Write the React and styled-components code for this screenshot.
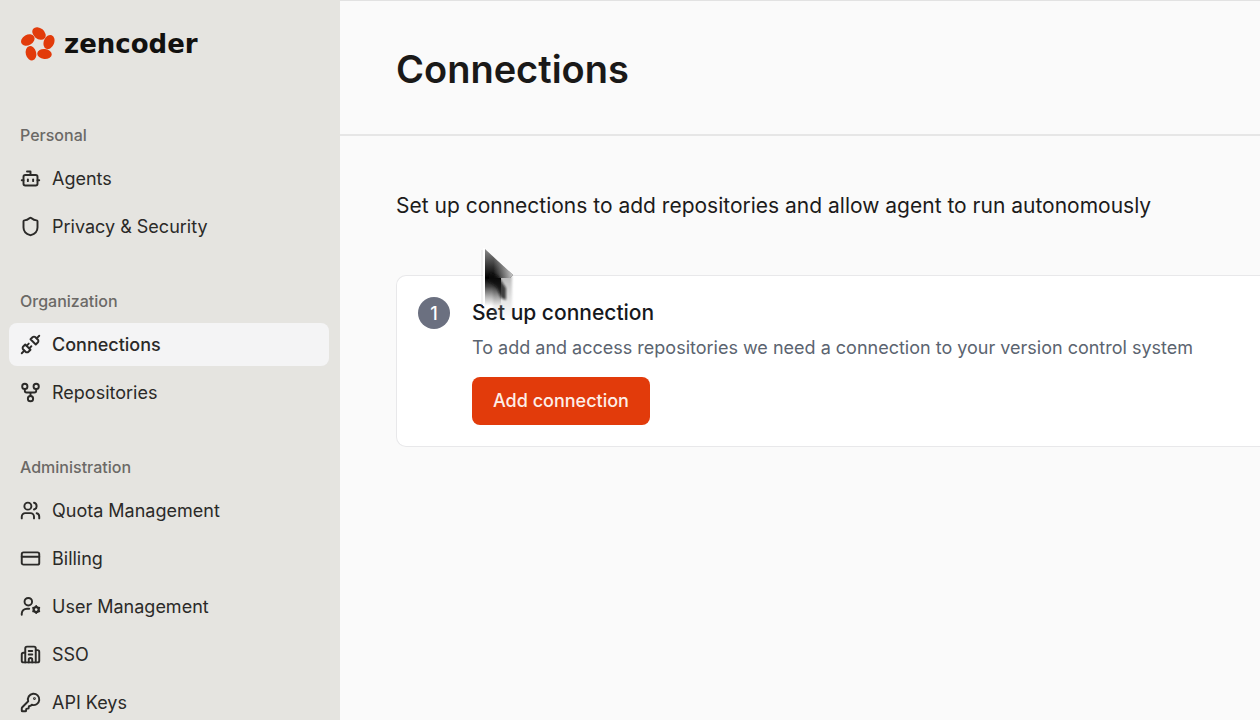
import React from 'react';
import styled, { createGlobalStyle } from 'styled-components';
import { Bot, Shield, Unplug, Users, CreditCard, Building2, KeyRound } from 'lucide-react';

const GlobalStyle = createGlobalStyle`
    * {
        box-sizing: border-box;
    }

    body {
        margin: 0;
        overflow: hidden;
        font-family: 'Inter', 'Liberation Sans', sans-serif;
        color: #1c1b1a;
        background: #fafafa;
    }
`

const Page = styled.div`
    display: flex;
    height: 100vh;
    overflow: hidden;
`

// Sidebar
const Sidebar = styled.aside`
    flex: 0 0 340px;
    padding: 24px 11px 0 9px;
    background: #e5e4e0;
`

const Logo = styled.a`
    display: flex;
    align-items: center;
    gap: 8px;
    height: 40px;
    padding-left: 11px;
    margin-bottom: 61px;
    font-family: 'DejaVu Sans', sans-serif;
    font-weight: 700;
    font-size: 26px;
    line-height: 24px;
    color: #12110f;
    text-decoration: none;
`

const Nav = styled.nav`
    display: flex;
    flex-direction: column;
    gap: 43px;
`

const GroupTitle = styled.h2`
    margin: 0 0 12px;
    padding-left: 11px;
    font-weight: 500;
    font-size: 16px;
    line-height: 20px;
    color: #6b6966;
`

const List = styled.ul`
    display: flex;
    flex-direction: column;
    gap: 5px;
    margin: 0;
    padding: 0;
    list-style: none;
`

const NavLink = styled.a`
    display: flex;
    align-items: center;
    gap: 11px;
    height: 43px;
    padding: 0 11px;
    border-radius: 8px;
    font-weight: ${({ $active }) => ($active ? 500 : 400)};
    font-size: 18px;
    line-height: 24px;
    color: #2b2a28;
    text-decoration: none;
    background: ${({ $active }) => ($active ? '#f4f4f5' : 'transparent')};
`

// Content
const Content = styled.main`
    flex: 1;
    min-width: 0;
    border-top: 1px solid #e2e2e2;
`

const Header = styled.header`
    padding: 44px 56px 40px;
    border-bottom: 2px solid #e6e6e6;
`

const Title = styled.h1`
    margin: 0;
    font-weight: 600;
    font-size: 38px;
    line-height: 49px;
    color: #1a1918;
`

const Body = styled.div`
    padding: 56px 0 0 56px;
`

const Intro = styled.p`
    margin: 0 0 56px;
    font-size: 21px;
    line-height: 27px;
    white-space: nowrap;
`

const Card = styled.section`
    display: flex;
    gap: 22px;
    padding: 21px;
    border: 1px solid #e8e8ea;
    border-right: 0;
    border-radius: 10px 0 0 10px;
    background: #ffffff;
`

const Step = styled.span`
    display: flex;
    flex: none;
    align-items: center;
    justify-content: center;
    width: 32px;
    height: 32px;
    border-radius: 50%;
    font-weight: 500;
    font-size: 18px;
    color: #ffffff;
    background: #6b7080;
`

const CardTitle = styled.h3`
    margin: 0 0 7px;
    font-weight: 500;
    font-size: 21px;
    line-height: 32px;
    color: #16181d;
`

const CardText = styled.p`
    margin: 0 0 17px;
    font-size: 18px;
    line-height: 24px;
    white-space: nowrap;
    color: #5b6470;
`

const Button = styled.button`
    height: 48px;
    padding: 0 21px;
    border: 0;
    border-radius: 8px;
    font-family: inherit;
    font-weight: 500;
    font-size: 18px;
    line-height: 24px;
    color: #fdeee8;
    background: #e23b0b;
`

const Cursor = styled.svg`
    position: absolute;
    left: 476px;
    top: 244px;
    pointer-events: none;
`

function Stroked({ size, strokeWidth, children }) {
    return (
        <svg
            width={size}
            height={size}
            viewBox="0 0 24 24"
            fill="none"
            stroke="currentColor"
            strokeWidth={strokeWidth}
            strokeLinecap="round"
            strokeLinejoin="round"
            aria-hidden="true"
        >
            {children}
        </svg>
    );
}

function RepoIcon(props) {
    return (
        <Stroked {...props}>
            <circle cx="5.500" cy="5" r="3" />
            <circle cx="18.500" cy="5" r="3" />
            <circle cx="12" cy="19" r="3" />
            <path d="M5.500 8v2a2 2 0 0 0 2 2h9a2 2 0 0 0 2-2V8M12 12v4" />
        </Stroked>
    );
}

function UserGearIcon(props) {
    return (
        <Stroked {...props}>
            <circle cx="9.500" cy="6.500" r="4.300" />
            <path d="M2 21.500v-1.500a6 6 0 0 1 6-5.500h2.500" />
            <circle cx="18.500" cy="15.500" r="2.900" strokeWidth="2.600" />
            <path d="M18.500 11.500v1M18.500 18.500v1M15 13.500l.9.500M21.100 17l.9.500M15 17.500l.9-.5M21.100 14l.9-.5" />
        </Stroked>
    );
}

const groups = [
    {
        title: 'Personal',
        items: [
            { label: 'Agents', icon: Bot },
            { label: 'Privacy & Security', icon: Shield },
        ],
    },
    {
        title: 'Organization',
        items: [
            { label: 'Connections', icon: Unplug, active: true },
            { label: 'Repositories', icon: RepoIcon },
        ],
    },
    {
        title: 'Administration',
        items: [
            { label: 'Quota Management', icon: Users },
            { label: 'Billing', icon: CreditCard },
            { label: 'User Management', icon: UserGearIcon },
            { label: 'SSO', icon: Building2 },
            { label: 'API Keys', icon: KeyRound },
        ],
    },
];

function LogoMark() {
    return (
        <svg width="36" height="36" viewBox="0 0 36 36" fill="#e23b0b" aria-hidden="true">
            <ellipse cx="19" cy="7.500" rx="7.500" ry="5.400" transform="rotate(40 19 7.500)" />
            <ellipse cx="29" cy="16" rx="7.300" ry="5.200" transform="rotate(-68 29 16)" />
            <ellipse cx="24.500" cy="28" rx="7.300" ry="5" transform="rotate(5 24.500 28)" />
            <ellipse cx="11" cy="27.300" rx="7.300" ry="5.200" transform="rotate(75 11 27.300)" />
            <ellipse cx="7.800" cy="14" rx="7.200" ry="5.200" transform="rotate(-30 7.800 14)" />
        </svg>
    );
}

function Pointer() {
    return (
        <Cursor width="48" height="84" viewBox="0 0 48 84" aria-hidden="true">
            <defs>
                <linearGradient id="head" x1="0" y1="0" x2="0" y2="1">
                    <stop offset="0" stopColor="#8a8a8a" />
                    <stop offset="0.600" stopColor="#333" />
                    <stop offset="1" stopColor="#000" />
                </linearGradient>
                <linearGradient id="side" x1="0" y1="0" x2="1" y2="0">
                    <stop offset="0.300" stopColor="#fafafa" stopOpacity="0" />
                    <stop offset="1" stopColor="#fafafa" stopOpacity="0.800" />
                </linearGradient>
                <linearGradient id="tail" x1="0" y1="0" x2="0" y2="1">
                    <stop offset="0" stopColor="#000" />
                    <stop offset="0.300" stopColor="#111" stopOpacity="0.800" />
                    <stop offset="1" stopColor="#555" stopOpacity="0" />
                </linearGradient>
                <linearGradient id="haze" x1="0" y1="0" x2="0" y2="1">
                    <stop offset="0" stopColor="#888" stopOpacity="0.600" />
                    <stop offset="1" stopColor="#bbb" stopOpacity="0" />
                </linearGradient>
                <filter id="soft">
                    <feGaussianBlur stdDeviation="1.2" />
                </filter>
            </defs>
            <rect x="17" y="32" width="19" height="46" fill="url(#haze)" filter="url(#soft)" />
            <path d="M9 34h16v28H9z" fill="url(#tail)" />
            <path d="M9 5 37 31 34 34H9z" fill="url(#head)" />
            <path d="M9 5 37 31 34 34H9z" fill="url(#side)" />
            <path d="m14 29 8 3 8 12v12l-5-2-5-12-8-5z" fill="#111" opacity="0.750" filter="url(#soft)" />
            <path d="M8 4v58" stroke="#fff" strokeWidth="2" />
            <path d="M6 6v54" stroke="#bbb" strokeWidth="1" opacity="0.350" />
        </Cursor>
    );
}

export default function App() {
    return (
        <>
            <GlobalStyle />
            <Page>
                <Sidebar>
                    <Logo href="#"><LogoMark />zencoder</Logo>
                    <Nav>
                        {groups.map((group) => (
                            <div key={group.title}>
                                <GroupTitle>{group.title}</GroupTitle>
                                <List>
                                    {group.items.map(({ label, icon: Icon, active }) => (
                                        <li key={label}>
                                            <NavLink href="#" $active={active}>
                                                <Icon size={21} strokeWidth={2.2} />
                                                {label}
                                            </NavLink>
                                        </li>
                                    ))}
                                </List>
                            </div>
                        ))}
                    </Nav>
                </Sidebar>
                <Content>
                    <Header>
                        <Title>Connections</Title>
                    </Header>
                    <Body>
                        <Intro>Set up connections to add repositories and allow agent to run autonomously</Intro>
                        <Card>
                            <Step>1</Step>
                            <div>
                                <CardTitle>Set up connection</CardTitle>
                                <CardText>To add and access repositories we need a connection to your version control system</CardText>
                                <Button type="button">Add connection</Button>
                            </div>
                        </Card>
                    </Body>
                </Content>
            </Page>
            <Pointer />
        </>
    );
}
